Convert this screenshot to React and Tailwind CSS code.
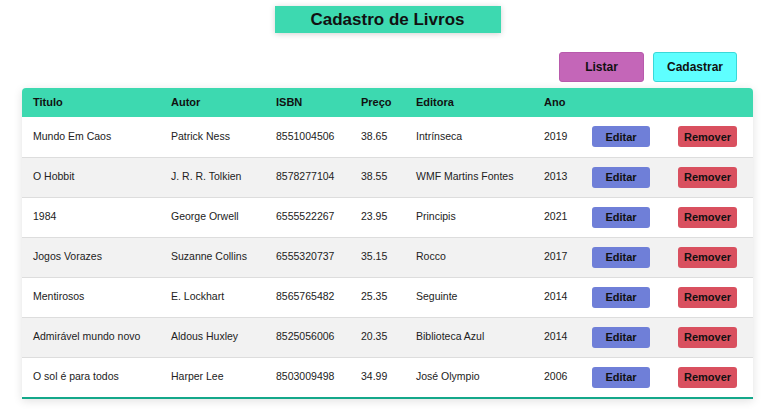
const livros = [
  { titulo: 'Mundo Em Caos', autor: 'Patrick Ness', isbn: '8551004506', preco: '38.65', editora: 'Intrínseca', ano: '2019' },
  { titulo: 'O Hobbit', autor: 'J. R. R. Tolkien', isbn: '8578277104', preco: '38.55', editora: 'WMF Martins Fontes', ano: '2013' },
  { titulo: '1984', autor: 'George Orwell', isbn: '6555522267', preco: '23.95', editora: 'Principis', ano: '2021' },
  { titulo: 'Jogos Vorazes', autor: 'Suzanne Collins', isbn: '6555320737', preco: '35.15', editora: 'Rocco', ano: '2017' },
  { titulo: 'Mentirosos', autor: 'E. Lockhart', isbn: '8565765482', preco: '25.35', editora: 'Seguinte', ano: '2014' },
  { titulo: 'Admirável mundo novo', autor: 'Aldous Huxley', isbn: '8525056006', preco: '20.35', editora: 'Biblioteca Azul', ano: '2014' },
  { titulo: 'O sol é para todos', autor: 'Harper Lee', isbn: '8503009498', preco: '34.99', editora: 'José Olympio', ano: '2006' },
];

export default function App() {
  return (
    <div className="w-[775px] h-[420px] bg-white text-[#222] font-['Liberation_Sans',Arial,sans-serif] overflow-hidden">
      <div className="flex justify-center pt-[6px]">
        <h1 className="w-[226px] h-[27px] bg-[#3dd9b0] shadow-[0_1px_6px_rgba(0,0,0,0.18)] flex items-center justify-center text-[17px] font-bold text-[#111]">
          Cadastro de Livros
        </h1>
      </div>

      <div className="flex justify-end gap-[9px] pr-[38px] mt-[19px]">
        <button className="w-[85px] h-[30px] rounded-[3px] bg-[#c466b8] border border-[#b85aac] text-[12px] font-bold text-[#111]">
          Listar
        </button>
        <button className="w-[84px] h-[30px] rounded-[3px] bg-[#5effff] border border-[#3ad8d8] text-[12px] font-bold text-[#111]">
          Cadastrar
        </button>
      </div>

      <div className="ml-[22px] mt-[6px] w-[731px] rounded-t-[4px] shadow-[0_2px_10px_rgba(0,0,0,0.12)] border-b-2 border-[#14a88a]">
        <table className="w-[731px] table-fixed border-collapse text-[10.5px]">
          <colgroup>
            <col className="w-[138px]" />
            <col className="w-[105px]" />
            <col className="w-[85px]" />
            <col className="w-[55px]" />
            <col className="w-[128px]" />
            <col className="w-[48px]" />
            <col className="w-[86px]" />
            <col className="w-[86px]" />
          </colgroup>
          <thead>
            <tr className="h-[29px] bg-[#3dd9b0] text-left text-[11px] text-[#111]">
              <th className="pl-[11px] font-bold rounded-tl-[4px]">Titulo</th>
              <th className="pl-[11px] font-bold">Autor</th>
              <th className="pl-[11px] font-bold">ISBN</th>
              <th className="pl-[11px] font-bold">Preço</th>
              <th className="pl-[11px] font-bold">Editora</th>
              <th className="pl-[11px] font-bold">Ano</th>
              <th></th>
              <th className="rounded-tr-[4px]"></th>
            </tr>
          </thead>
          <tbody>
            {livros.map((l, i) => (
              <tr key={l.isbn} className={`h-[40px] ${i % 2 === 1 ? 'bg-[#f2f2f2]' : 'bg-white'} ${i < livros.length - 1 ? 'border-b border-[#dddddd]' : ''}`}>
                <td className="pl-[11px] whitespace-nowrap">{l.titulo}</td>
                <td className="pl-[11px] whitespace-nowrap">{l.autor}</td>
                <td className="pl-[11px]">{l.isbn}</td>
                <td className="pl-[11px]">{l.preco}</td>
                <td className="pl-[11px] whitespace-nowrap">{l.editora}</td>
                <td className="pl-[11px]">{l.ano}</td>
                <td className="pl-[11px]">
                  <button className="w-[58px] h-[21px] rounded-[3px] bg-[#6f7fd8] text-[11px] font-bold text-[#111]">Editar</button>
                </td>
                <td className="pl-[11px]">
                  <button className="w-[59px] h-[21px] rounded-[3px] bg-[#d9505f] text-[11px] font-bold text-[#111]">Remover</button>
                </td>
              </tr>
            ))}
          </tbody>
        </table>
      </div>
    </div>
  );
}
